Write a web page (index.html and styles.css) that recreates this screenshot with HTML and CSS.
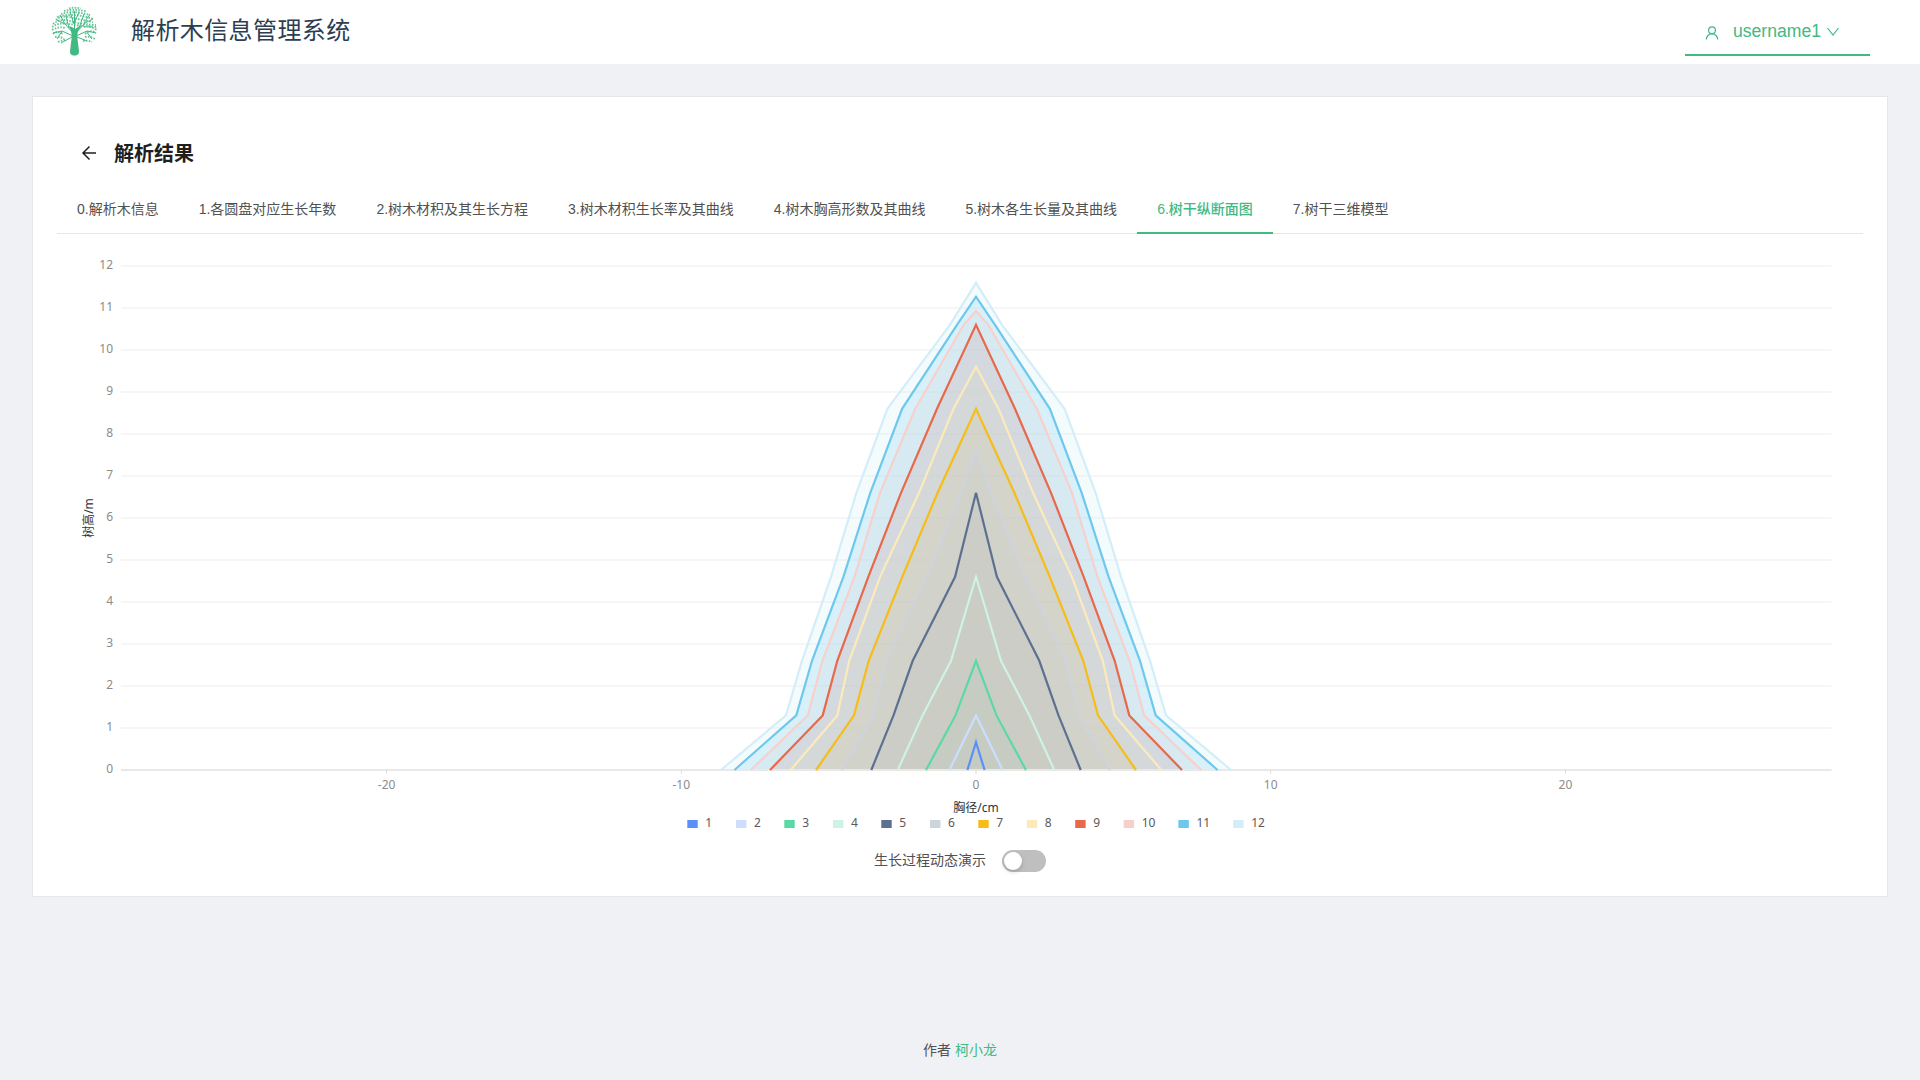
FILE: index.html
```html
<!DOCTYPE html>
<html lang="zh-CN">
<head>
<meta charset="utf-8">
<title>解析木信息管理系统</title>
<link rel="stylesheet" href="styles.css">
</head>
<body>
<header class="header">
  <div class="brand">
    <svg class="logo" viewBox="0 0 60 60" width="60" height="60" aria-hidden="true">
      <path class="logo-trunk" d="M23 26c3 3 4 7 3.500 13l-1.500 12c0 3 1 4.500 4.500 4.500s4.500-1.500 4.500-4.500l-1.500-12c-.5-6 .5-10 4.500-13l-4 1-3 2-3-2z"/>
      <g class="logo-branch">
        <path d="M29.500 36V11M29 34L20 24 12 20M30 34l10-11 8-4M28 36L17 31 8 33M31 36l11-5 9 2M24 28l-3-12M34 28l5-14M20 24l-5-9M39 23l6-9M17 31l-5 8M41 31l6 8M29 24l-4-12M29 24l5-12M27 37l-11 6M32 37l10 4"/>
      </g>
      <g class="logo-leaves">
        <path d="M24 8.500Q29 7 36 8.500M19 11Q29 8.500 42 11.500M16 14Q28 10 45 15M12 17Q28 12 48 19M11 20Q16 15 24 17T48 22M8 24Q15 18 25 21T51 25M7 27Q14 22 24 24T52 27M7 30Q14 26 20 28M39 27Q44 25 52 30M8 34Q12 30 18 34M40 34Q46 29 51 33M10 37Q15 36 19 39M40 37Q45 36 50 39M13 42Q17 40 21 40M38 41Q43 40 47 42"/>
      </g>
    </svg>
    <h1 class="brand-name">解析木信息管理系统</h1>
  </div>
  <div class="user">
    <svg class="user-icon" viewBox="0 0 14 14" width="14" height="14" aria-hidden="true"><circle cx="7" cy="4.300" r="3.400"/><path d="M1.300 13.500a5.700 5.700 0 0 1 11.400 0"/></svg>
    <span class="user-name">username1</span>
    <svg class="chevron" viewBox="0 0 14 14" width="14" height="14" aria-hidden="true"><path d="M1.500 3l5.500 7 5.500-7"/></svg>
  </div>
</header>

<main class="card">
  <div class="page-head">
    <svg class="back" viewBox="0 0 16 16" width="16" height="16" aria-hidden="true"><path d="M15 8H2.200M8.500 1.500L2 8l6.500 6.500"/></svg>
    <h2 class="page-title">解析结果</h2>
  </div>
  <nav class="tabs">
    <a class="tab">0.解析木信息</a>
    <a class="tab">1.各圆盘对应生长年数</a>
    <a class="tab">2.树木材积及其生长方程</a>
    <a class="tab">3.树木材积生长率及其曲线</a>
    <a class="tab">4.树木胸高形数及其曲线</a>
    <a class="tab">5.树木各生长量及其曲线</a>
    <a class="tab tab-active">6.树干纵断面图</a>
    <a class="tab">7.树干三维模型</a>
  </nav>
  <svg class="chart" viewBox="57 246 1806 594" width="1806" height="594">
    <g id="grid"></g>
    <g id="areas" class="areas"></g>
    <g id="axis"></g>
    <g id="lines" class="lines"></g>
    <text class="axis-title" x="976" y="812">胸径/cm</text>
    <text class="axis-title" transform="translate(92.500 518) rotate(-90)">树高/m</text>
    <g id="legend"></g>
  </svg>
  <div class="demo">
    <span class="demo-label">生长过程动态演示</span>
    <span class="switch" role="switch" aria-checked="false"></span>
  </div>
</main>

<footer class="footer">作者 <a class="author">柯小龙</a></footer>
<script src="chart.js"></script>
</body>
</html>
```
FILE: styles.css
```css
* { box-sizing: border-box; }

body {
  margin: 0;
  min-height: 1080px;
  display: flex;
  flex-direction: column;
  background: #f0f1f5;
  color: #515151;
  font: 14px/22px "Liberation Sans", "Noto Sans CJK SC", sans-serif;
}

.header {
  height: 64px;
  padding: 0 50px 0 45px;
  display: flex;
  justify-content: space-between;
  background: #fff;
}

.brand { display: flex; align-items: flex-start; gap: 26px; }
.logo { display: block; }
.logo-trunk { fill: #42b983; }
.logo-branch { fill: none; stroke: #42b983; stroke-width: 1; }
.logo-leaves { fill: none; stroke: #42b983; stroke-width: 1.9; stroke-dasharray: 1.6 1.3; opacity: 0.8; }
.brand-name {
  margin: 0;
  color: #2c3e50;
  font-size: 24px;
  font-weight: 400;
  line-height: 62px;
  letter-spacing: 0.4px;
}

.user {
  width: 185px;
  height: 56px;
  padding: 8px 0 0 20px;
  display: flex;
  align-items: center;
  border-bottom: 2px solid #42b983;
  color: #42b983;
  font-size: 17.600px;
}
.user-icon, .chevron { fill: none; stroke: #42b983; stroke-width: 1.2; }
.user-icon { margin-top: 3px; }
.user-name { margin: 0 5px 0 14px; }
.chevron { margin-top: 2px; }

.card {
  height: 801px;
  margin: 32px 32px 0;
  padding: 44px 24px 0;
  background: #fff;
  border: 1px solid #e6e7e9;
}

.page-head { height: 24px; padding-left: 24px; display: flex; align-items: center; gap: 17px; }
.back { fill: none; stroke: #1f1f1f; stroke-width: 1.5; }
.page-title { margin: 0; color: #1f1f1f; font-size: 20px; line-height: 24px; font-weight: 700; padding-top: 1px; }

.tabs { height: 47px; margin-top: 22px; display: flex; border-bottom: 1px solid #e6e6e6; }
.tab { height: 47px; padding: 11px 20px 0; white-space: nowrap; }
.tab-active { color: #42b983; font-weight: 500; border-bottom: 2px solid #42b983; }

.chart { display: block; margin-top: 12px; font-family: "Noto Sans", "Noto Sans CJK SC", sans-serif; font-size: 12px; }
.grid-line { stroke: #f6f6f6; stroke-width: 2; }
.axis-line { stroke: #e8e8e8; stroke-width: 2; }
.tick { stroke: #dedede; stroke-width: 1; }
.tick-label { fill: #8c8c8c; }
.end { text-anchor: end; }
.middle, .axis-title { text-anchor: middle; }
.axis-title { fill: #2c3542; }
.legend-label { fill: #595959; }
.areas { fill-opacity: 0.25; }
.lines { fill: none; stroke-width: 2.2; }

.demo { height: 22px; margin-top: 10px; display: flex; justify-content: center; gap: 16px; }
.demo-label { line-height: 20px; }
.switch {
  width: 44px;
  height: 22px;
  padding: 2px;
  border-radius: 11px;
  background: #bfbfbf;
}
.switch::before {
  content: "";
  display: block;
  width: 18px;
  height: 18px;
  border-radius: 50%;
  background: #fff;
  box-shadow: 0 2px 4px rgba(0, 35, 11, 0.2);
}

.footer { margin-top: 142px; text-align: center; }
.author { color: #42b983; }
```
FILE: chart.js
```js
// Plot geometry: origin and pixels per unit of height and diameter.
const X0 = 976, Y0 = 770, PER_M = 42, PER_CM = 29.47;
const LEVELS = [0, 1.3, 2.6, 4.6, 6.6, 8.6, 10.6];

// Each series: colour, legend x, tree top in metres, half widths at LEVELS.
const SERIES = [
  ['#5b8ff9', 687.3, 0.66, [8.6]],
  ['#cdddfd', 736, 1.3, [26.6]],
  ['#5ad8a6', 784.3, 2.6, [50, 20.5]],
  ['#cdf3e4', 833, 4.6, [78.3, 53.4, 25]],
  ['#5d7092', 881.3, 6.6, [104.7, 82.5, 63.3, 20.9]],
  ['#ced4de', 930, 7.6, [134, 103, 90, 49, 15]],
  ['#f6bd16', 978.3, 8.6, [160, 122, 107.3, 73.7, 38.4]],
  ['#fcebb9', 1026.8, 9.6, [185.4, 138.7, 126.8, 95.9, 57, 22.5]],
  ['#e8684a', 1075.2, 10.6, [206, 153.3, 138.7, 107.7, 75, 39]],
  ['#f8d0cb', 1123.7, 10.93, [225.2, 168.2, 153.6, 121.5, 96, 60.8, 12.2]],
  ['#6dc8ec', 1178.4, 11.27, [241.6, 179.7, 164, 132.6, 105.7, 73.9, 19]],
  ['#d3eef9', 1233.2, 11.6, [255, 190, 174, 145, 119.6, 88.6, 26]]
];

const NS = 'http://www.w3.org/2000/svg';
function add(parent, tag, attrs, text) {
  const el = document.createElementNS(NS, tag);
  for (const key in attrs) el.setAttribute(key, attrs[key]);
  if (text !== undefined) el.textContent = text;
  document.getElementById(parent).appendChild(el);
}

for (let m = 0; m <= 12; m++) {
  const y = Y0 - m * PER_M;
  if (m) add('grid', 'line', { class: 'grid-line', x1: 121, x2: 1831.5, y1: y, y2: y });
  add('axis', 'text', { class: 'tick-label end', x: 113, y: y + 3 }, m);
}
add('axis', 'line', { class: 'axis-line', x1: 121, x2: 1831.5, y1: Y0, y2: Y0 });
for (let cm = -20; cm <= 20; cm += 10) {
  const x = X0 + cm * PER_CM;
  add('axis', 'line', { class: 'tick', x1: x, x2: x, y1: Y0, y2: Y0 + 4 });
  add('axis', 'text', { class: 'tick-label middle', x: x, y: 789 }, cm);
}

SERIES.forEach(([color, legendX, top, widths], i) => {
  const left = widths.map((w, k) => [X0 - w, Y0 - LEVELS[k] * PER_M]);
  const right = widths.map((w, k) => [X0 + w, Y0 - LEVELS[k] * PER_M]).reverse();
  const points = [...left, [X0, Y0 - top * PER_M], ...right].join(' ');
  add('areas', 'polygon', { points, fill: color });
  add('lines', 'polyline', { points, stroke: color });
  add('legend', 'rect', { x: legendX, y: 820, width: 10.4, height: 8, fill: color });
  add('legend', 'text', { class: 'legend-label', x: legendX + 18, y: 827 }, i + 1);
});
```
